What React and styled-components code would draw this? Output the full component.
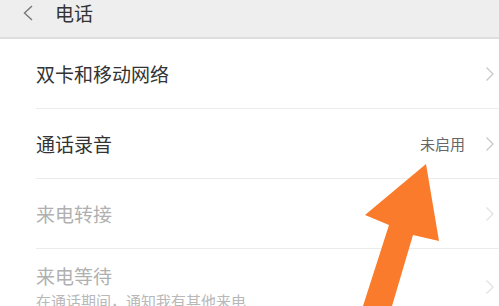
import React from 'react';
import styled, { createGlobalStyle } from 'styled-components';

const GlobalStyle = createGlobalStyle`
  html, body {
    margin: 0;
    padding: 0;
    background: #ffffff;
    font-family: "Noto Sans CJK SC", "Noto Sans", sans-serif;
    overflow: hidden;
  }
`;

const Page = styled.div`
  position: relative;
  width: 499px;
  height: 306px;
  overflow: hidden;
  background: #fff;
`;

const Header = styled.header`
  height: 37px;
  background: #eeeeee;
  border-bottom: 2px solid #dedede;
  display: flex;
  align-items: flex-start;
  padding-left: 22px;
  box-sizing: content-box;
`;

const BackButton = styled.span`
  display: flex;
  width: 14px;
  height: 16px;
  margin-top: 5px;
  margin-right: 19px;
`;

const Title = styled.h1`
  margin: 0;
  font-size: 19px;
  font-weight: 400;
  line-height: 26px;
  color: #333;
`;

const List = styled.div`
  display: flex;
  flex-direction: column;
  padding-left: 36px;
`;

const Row = styled.div`
  display: flex;
  align-items: center;
  height: ${(p) => (p.$tall ? 'auto' : '69px')};
  padding-top: ${(p) => (p.$tall ? '14px' : '0')};
  border-bottom: 1px solid #ececec;
  padding-right: 4px;
`;

const Texts = styled.div`
  flex: 1;
  display: flex;
  flex-direction: column;
`;

const Label = styled.span`
  font-size: 19px;
  line-height: 26px;
  color: ${(p) => (p.$disabled ? '#b0b0b0' : '#333')};
`;

const Sub = styled.span`
  font-size: 15px;
  line-height: 20px;
  margin-top: 2px;
  color: #b8b8b8;
`;

const Value = styled.span`
  font-size: 15px;
  color: #666;
  margin-right: 20px;
`;

const Arrow = styled.svg`
  position: absolute;
  left: 0;
  top: 0;
  pointer-events: none;
`;

const Chevron = ({ light }) => (
  <svg width="10" height="16" viewBox="0 0 10 16">
    <path d="M1.5 1.5 L8 8 L1.5 14.5" fill="none" stroke={light ? '#e2e2e2' : '#c8c8c8'} strokeWidth="1.3" />
  </svg>
);

export default function App() {
  return (
    <Page>
      <GlobalStyle />
      <Header>
        <BackButton>
          <svg width="12" height="16" viewBox="0 0 12 16">
            <path d="M10 1 L2.5 8 L10 15" fill="none" stroke="#777" strokeWidth="1.4" />
          </svg>
        </BackButton>
        <Title>电话</Title>
      </Header>
      <List>
        <Row>
          <Texts><Label>双卡和移动网络</Label></Texts>
          <Chevron />
        </Row>
        <Row>
          <Texts><Label>通话录音</Label></Texts>
          <Value>未启用</Value>
          <Chevron />
        </Row>
        <Row>
          <Texts><Label $disabled>来电转接</Label></Texts>
          <Chevron light />
        </Row>
        <Row $tall>
          <Texts>
            <Label $disabled>来电等待</Label>
            <Sub>在通话期间，通知我有其他来电</Sub>
          </Texts>
          <Chevron light />
        </Row>
      </List>
      <Arrow width="499" height="306" viewBox="0 0 499 306">
        <polygon
          points="426,164 439,241 413,235 392,306 363,306 389,225 365,215"
          fill="#f97b2b"
        />
      </Arrow>
    </Page>
  );
}
